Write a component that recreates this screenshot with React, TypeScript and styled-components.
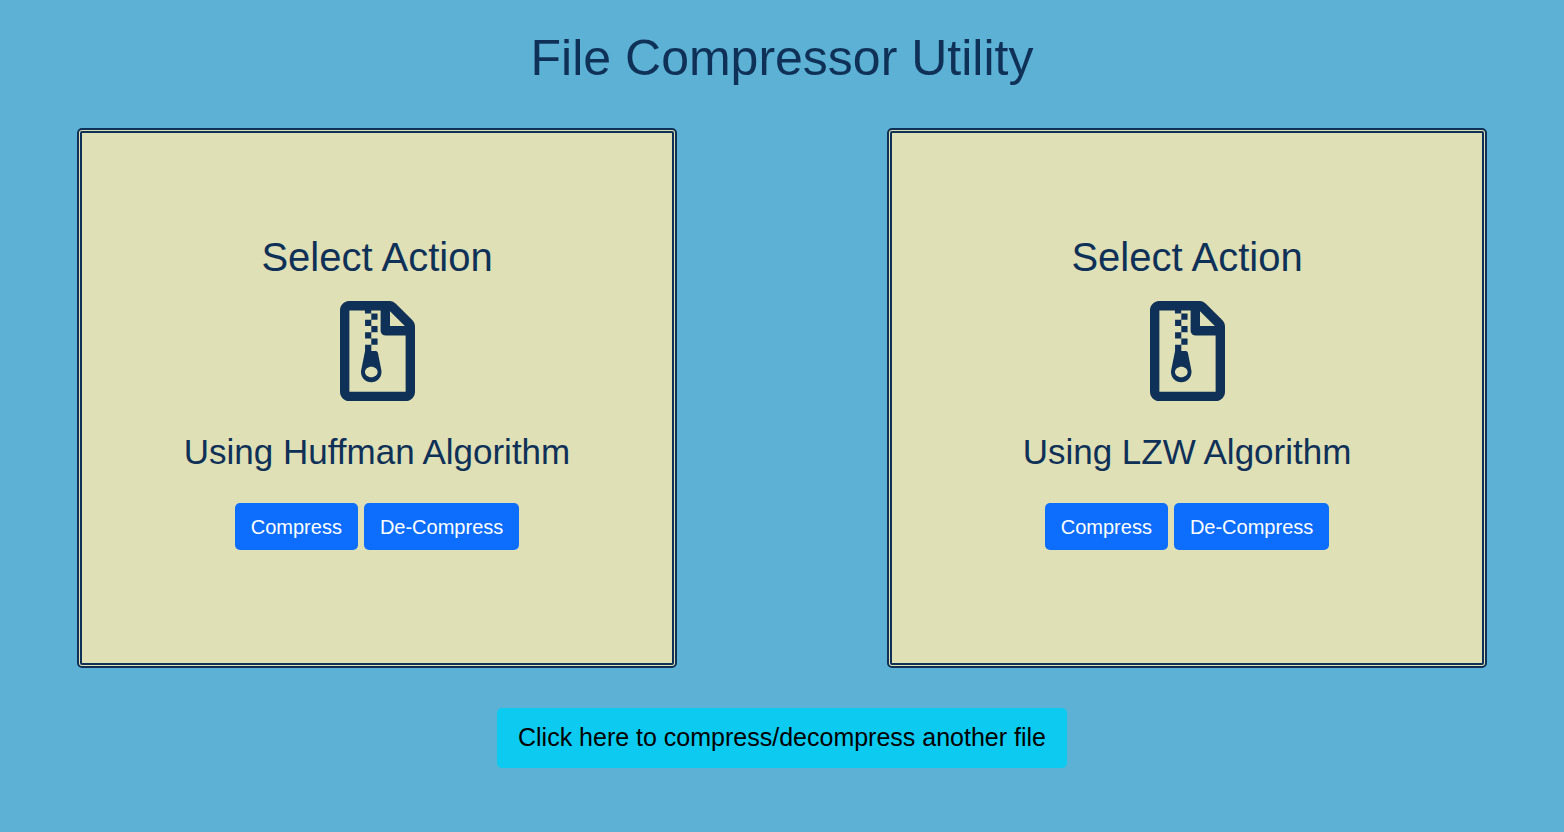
import React from "react";
import styled, { createGlobalStyle } from "styled-components";
import { FaRegFileArchive } from "react-icons/fa";

const GlobalStyle = createGlobalStyle`
  *, *::before, *::after { box-sizing: border-box; }
  body {
    margin: 0;
    background: #5db1d4;
    color: #0f3057;
    font-family: "Liberation Sans", Arial, sans-serif;
    line-height: 1.5;
  }
`;

const Page = styled.main`
  min-height: 832px;
  display: flex;
  flex-direction: column;
  align-items: center;
`;

const Title = styled.h1`
  margin: 28px 0 40px;
  font-size: 50px;
  font-weight: 400;
  line-height: 60px;
`;

const Panels = styled.div`
  display: flex;
  gap: 210px;
`;

const Panel = styled.section`
  width: 600px;
  height: 540px;
  display: flex;
  flex-direction: column;
  align-items: center;
  padding-top: 100px;
  background: #dfe0b5;
  border: 5px double #0f3057;
  border-radius: 5px;
`;

const Heading = styled.h2`
  margin: 0 0 20px;
  font-size: 40px;
  font-weight: 400;
  line-height: 48px;
`;

const ArchiveIcon = styled(FaRegFileArchive)`
  width: 75px;
  height: 100px;
  margin-left: 1px;
`;

const Method = styled.h3`
  margin: 30px 0 30px;
  font-size: 35px;
  font-weight: 400;
  line-height: 42px;
`;

const Actions = styled.div`
  display: flex;
  gap: 6px;
`;

const Button = styled.button`
  height: 47px;
  padding: 1px 16px 0;
  border: 0;
  border-radius: 5px;
  background: #0d6efd;
  color: #fff;
  font: 20px "Liberation Sans", Arial, sans-serif;
`;

const ResetButton = styled(Button)`
  width: 570px;
  height: 60px;
  margin-top: 40px;
  padding: 0 0 1px;
  background: #0dcaf0;
  color: #000;
  font-size: 25px;
`;

function AlgorithmPanel({ name }: { name: string }) {
  return (
    <Panel>
      <Heading>Select Action</Heading>
      <ArchiveIcon />
      <Method>Using {name} Algorithm</Method>
      <Actions>
        <Button>Compress</Button>
        <Button>De-Compress</Button>
      </Actions>
    </Panel>
  );
}

export default function App() {
  return (
    <Page>
      <GlobalStyle />
      <Title>File Compressor Utility</Title>
      <Panels>
        <AlgorithmPanel name="Huffman" />
        <AlgorithmPanel name="LZW" />
      </Panels>
      <ResetButton>Click here to compress/decompress another file</ResetButton>
    </Page>
  );
}
